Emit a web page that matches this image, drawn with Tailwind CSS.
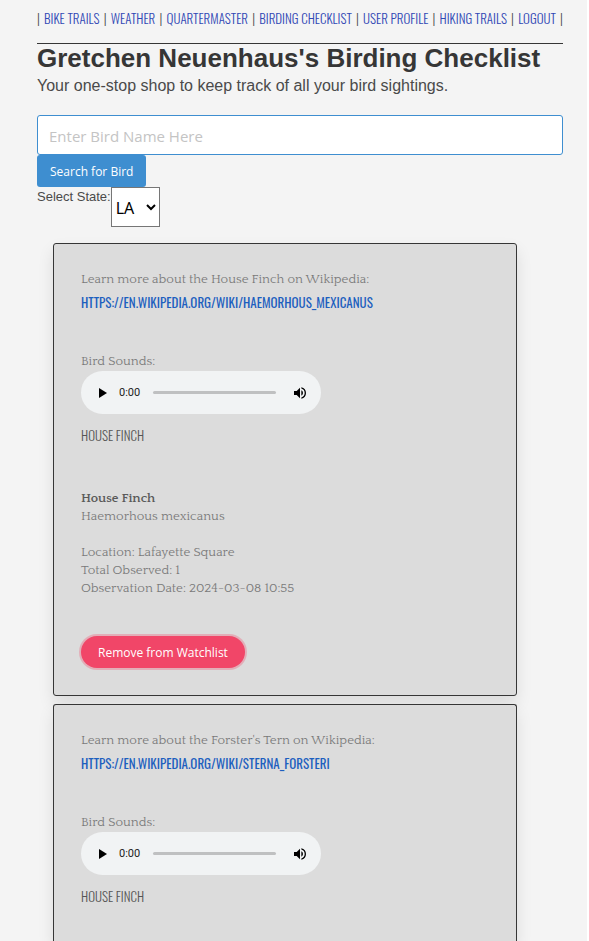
<!DOCTYPE html>
<html lang="en">
<head>
<meta charset="utf-8">
<meta name="viewport" content="width=device-width, initial-scale=1">
<title>Birding Checklist</title>
<script src="https://cdn.jsdelivr.net/npm/@tailwindcss/browser@4"></script>
</head>
<body class="bg-[#f4f4f4] border-r-2 border-white font-['Liberation_Sans',Arial,sans-serif] text-[#4a4a4a]">
<div class="min-h-screen flex flex-col pl-[37px] pr-6">
  <nav class="h-[43px] pt-2 text-[13px] leading-5 whitespace-nowrap flex justify-between font-['Oswald',sans-serif] font-light">
    <span>|</span>
    <a href="#" class="text-[#3148b4]">BIKE TRAILS</a><span>|</span>
    <a href="#" class="text-[#3148b4]">WEATHER</a><span>|</span>
    <a href="#" class="text-[#3148b4]">QUARTERMASTER</a><span>|</span>
    <a href="#" class="text-[#3148b4]">BIRDING CHECKLIST</a><span>|</span>
    <a href="#" class="text-[#3148b4]">USER PROFILE</a><span>|</span>
    <a href="#" class="text-[#3148b4]">HIKING TRAILS</a><span>|</span>
    <a href="#" class="text-[#3148b4]">LOGOUT</a><span>|</span>
  </nav>
  <header class="border-t border-[#363636]">
    <h1 class="text-[26px] leading-7 font-bold text-[#363636]">Gretchen Neuenhaus's Birding Checklist</h1>
    <p class="mt-0.5 text-base leading-6">Your one-stop shop to keep track of all your bird sightings.</p>
  </header>
  <form class="mt-[17px] flex flex-col items-start">
    <input type="text" aria-label="Bird name" placeholder="Enter Bird Name Here" class="w-full h-10 px-[11px] pt-0.5 rounded-[3px] border border-[#3e8ed0] bg-white text-[15px] font-['Segoe_UI','Open_Sans',sans-serif] placeholder:text-[#c4c4c4]">
    <button type="button" class="h-8 px-[13px] pt-0.5 rounded-[3px] bg-[#3e8ed0] text-white text-xs font-['Segoe_UI','Open_Sans',sans-serif]">Search for Bird</button>
    <div class="flex items-start">
      <label for="state" class="text-[13px] leading-5">Select State:</label>
      <select id="state" class="h-10 w-[49px] pt-0.5 border border-[#767676] bg-white text-black text-base font-['Noto_Sans',sans-serif]"><option>LA</option></select>
    </div>
  </form>
  <main class="mt-4 ml-4 mr-[46px] flex-1 flex flex-col gap-2 text-[13px] leading-[18px] text-[#7a7a7a] font-['Quattrocento',serif]">
    <article class="rounded-[3px] border border-[#363636] bg-[#dcdcdc] px-[27px] pt-[26px] pb-[27px] shadow-[0_8px_16px_rgba(10,10,10,0.1)]">
      <p>Learn more about the House Finch on Wikipedia:</p>
      <a href="#" class="block text-[13px] leading-7 text-[#1d5fbf] font-['Oswald',sans-serif]">HTTPS://EN.WIKIPEDIA.ORG/WIKI/HAEMORHOUS_MEXICANUS</a>
      <p class="mt-9">Bird Sounds:</p>
      <div class="mt-px w-60 h-[43px] rounded-full bg-[#f1f3f4] flex items-center pl-[18px] pr-[13px] text-black">
        <button type="button" aria-label="Play"><svg class="w-2 h-[10px]" viewBox="0 0 8 10"><path fill="currentColor" d="M0 0l8 5-8 5z"/></svg></button>
        <span class="ml-3 w-[22px] text-[11px] font-['Roboto',sans-serif] text-[#222]">0:00</span>
        <input type="range" aria-label="Position" value="0" class="ml-3 flex-1 min-w-0 h-[3px] rounded-full bg-[#bfc0c1] appearance-none [&::-webkit-slider-thumb]:appearance-none">
        <button type="button" aria-label="Mute" class="ml-4"><svg class="size-4" viewBox="0 0 24 24"><path fill="currentColor" d="M3 9v6h4l5 5V4L7 9H3zm13.500 3A4.500 4.500 0 0 0 14 7.970v8.050A4.500 4.500 0 0 0 16.500 12zM14 3.230v2.060a7 7 0 0 1 0 13.420v2.060a9 9 0 0 0 0-17.540z"/></svg></button>
      </div>
      <p class="mt-3 text-[13px] text-[#555] font-['Oswald',sans-serif] font-light">HOUSE FINCH</p>
      <div class="mt-[45px]">
        <h2 class="font-bold text-[#5a5a5a]">House Finch</h2>
        <p>Haemorhous mexicanus</p>
        <p class="mt-[18px]">Location: Lafayette Square</p>
        <p>Total Observed: 1</p>
        <p>Observation Date: 2024-03-08 10:55</p>
      </div>
      <button type="button" class="mt-[39px] block h-8 px-[17px] pt-0.5 rounded-full bg-[#f14668] text-white text-xs ring-2 ring-[#f14668]/30 font-['Segoe_UI','Open_Sans',sans-serif]">Remove from Watchlist</button>
    </article>
    <article class="flex-1 rounded-t-[3px] border border-b-0 border-[#363636] bg-[#dcdcdc] px-[27px] pt-[26px] shadow-[0_8px_16px_rgba(10,10,10,0.1)]">
      <p>Learn more about the Forster's Tern on Wikipedia:</p>
      <a href="#" class="block text-[13px] leading-7 text-[#1d5fbf] font-['Oswald',sans-serif]">HTTPS://EN.WIKIPEDIA.ORG/WIKI/STERNA_FORSTERI</a>
      <p class="mt-9">Bird Sounds:</p>
      <div class="mt-px w-60 h-[43px] rounded-full bg-[#f1f3f4] flex items-center pl-[18px] pr-[13px] text-black">
        <button type="button" aria-label="Play"><svg class="w-2 h-[10px]" viewBox="0 0 8 10"><path fill="currentColor" d="M0 0l8 5-8 5z"/></svg></button>
        <span class="ml-3 w-[22px] text-[11px] font-['Roboto',sans-serif] text-[#222]">0:00</span>
        <input type="range" aria-label="Position" value="0" class="ml-3 flex-1 min-w-0 h-[3px] rounded-full bg-[#bfc0c1] appearance-none [&::-webkit-slider-thumb]:appearance-none">
        <button type="button" aria-label="Mute" class="ml-4"><svg class="size-4" viewBox="0 0 24 24"><path fill="currentColor" d="M3 9v6h4l5 5V4L7 9H3zm13.500 3A4.500 4.500 0 0 0 14 7.970v8.050A4.500 4.500 0 0 0 16.500 12zM14 3.230v2.060a7 7 0 0 1 0 13.420v2.060a9 9 0 0 0 0-17.540z"/></svg></button>
      </div>
      <p class="mt-3 text-[13px] text-[#555] font-['Oswald',sans-serif] font-light">HOUSE FINCH</p>
    </article>
  </main>
</div>
</body>
</html>
